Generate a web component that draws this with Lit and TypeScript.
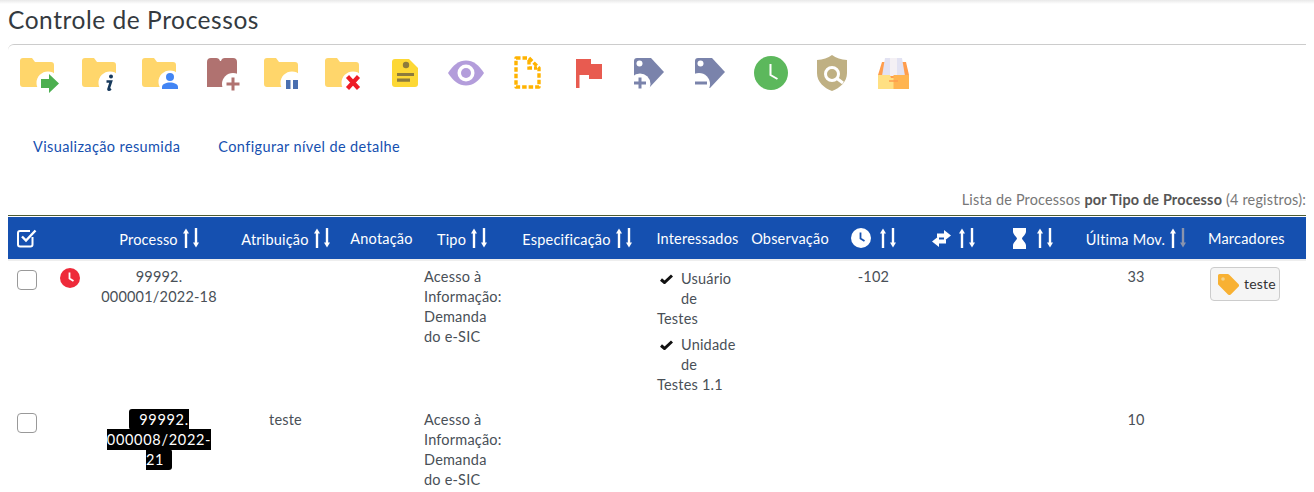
import {LitElement, css, html, svg} from 'lit';
import {customElement} from 'lit/decorators.js';

const folder = (badge: unknown) => svg`
  <path d="M0 5a3 3 0 0 1 3-3h9l3 4h16a3 3 0 0 1 3 3v19a3 3 0 0 1-3 3H3a3 3 0 0 1-3-3z" fill="#ffd66b"/>
  ${badge}`;

const toolbarIcons = [
  folder(svg`<circle cx="28" cy="27" r="11.5" fill="#fff"/>
    <path d="M21 23h8v-5l10 9.500-10 9.500v-5h-8z" fill="#4caf50"/>`),
  svg`<g transform="translate(1)">${folder(svg`
    <circle cx="28" cy="27" r="11.500" fill="#fff"/>
    <circle cx="29" cy="20.500" r="2" fill="#17395c"/>
    <path d="M24.500 25.500h4.500l-2.500 7.500c-.2.8.5 1 2.300-.4" fill="none" stroke="#17395c" stroke-width="2.600"/>`)}</g>`,
  folder(svg`<circle cx="28" cy="26" r="11.500" fill="#fff"/>
    <circle cx="28" cy="21" r="4" fill="#4285f4"/>
    <path d="M20 33v-2c0-3 4-4.500 8-4.500s8 1.500 8 4.500v2z" fill="#4285f4"/>`),
  svg`<path d="M4 31V6a4 4 0 0 1 4-4h5a4 4 0 0 1 4 3h1a4 4 0 0 1 4-3h8a4 4 0 0 1 4 4v25z" fill="#b07270"/>
    <circle cx="30" cy="28" r="11" fill="#fff"/>
    <path d="M30 21.500v13M23.500 28h13" stroke="#b07270" stroke-width="3"/>`,
  folder(svg`<circle cx="28" cy="27" r="11.500" fill="#fff"/>
    <path d="M22 24h4.500v9H22zM29 24h5v9h-5z" fill="#4a6fb0"/>`),
  folder(svg`<circle cx="28" cy="27" r="11.500" fill="#fff"/>
    <path d="M22.500 20.500l11 12M33.500 20.500l-11 12" stroke="#ee1c25" stroke-width="4.200"/>`),
  svg`<path d="M9 3h14l9 9v16a3 3 0 0 1-3 3H9a3 3 0 0 1-3-3V6a3 3 0 0 1 3-3z" fill="#fdd835"/>
    <circle cx="20" cy="9" r="3.200" fill="#8d7b3c"/>
    <path d="M11 17h17v3H11zM11 22.500h13v3.300H11z" fill="#8d7b3c"/>`,
  svg`<path d="M1 17C6 9 12 4.500 19 4.500S32 9 37 17c-5 8-11 12.500-18 12.500S6 25 1 17z" fill="#b39ddb"/>
    <circle cx="19" cy="17" r="8.500" fill="#fff"/>
    <circle cx="19" cy="17" r="5" fill="#b39ddb"/>`,
  svg`<path d="M8 2h13l10 10v19H8z" fill="none" stroke="#ffb300" stroke-width="3.400" stroke-dasharray="4.500 2" stroke-linejoin="round"/>
    <path d="M21 4v8h8" fill="none" stroke="#ffb300" stroke-width="3.400" stroke-dasharray="4.500 2"/>`,
  svg`<path d="M7 3h3.500v29H7z" fill="#e85b50"/>
    <path d="M10 3h12v5h11v15H20v-4H10z" fill="#e85b50"/>`,
  svg`<path d="M4 5a3 3 0 0 1 3-3h14l13 14-15 16H4z" fill="#7a83ab"/>
    <circle cx="9.500" cy="7.500" r="3" fill="#fff"/>
    <circle cx="10" cy="28" r="10.500" fill="#fff"/>
    <path d="M10 21.500v11M4 27h12" stroke="#7a83ab" stroke-width="3"/>`,
  svg`<path d="M4 5a3 3 0 0 1 3-3h14l13 14-15 16H4z" fill="#7a83ab"/>
    <circle cx="9.500" cy="7.500" r="3" fill="#fff"/>
    <circle cx="8" cy="28" r="11" fill="#fff"/>
    <path d="M4 27h12" stroke="#7a83ab" stroke-width="3"/>`,
  svg`<circle cx="19" cy="17" r="17" fill="#5cb85c"/>
    <path d="M18.500 8v11l7 4" fill="none" stroke="#fff" stroke-width="2"/>`,
  svg`<path d="M19-1c4 3 9 4.500 15 5v13c0 9-7 15-15 18C11 32 4 26 4 17V4c6-.5 11-2 15-5z" fill="#bfb083"/>
    <circle cx="19" cy="18" r="6.500" fill="none" stroke="#fff" stroke-width="3"/>
    <path d="M24 22.500l6 4.500" stroke="#fff" stroke-width="3"/>`,
  svg`<path d="M8 6h24l3 13v6H4v-6z" fill="#ff9d4d"/>
    <path d="M11 2h17l3 18H8z" fill="#e2e2f2"/>
    <path d="M16 2h7v18h-7z" fill="#f4f0f4"/>
    <path d="M4 19h12l1 3h4l2-3h12v14H4z" fill="#ffe083"/>
    <path d="M19.500 19H35v14H19.500z" fill="#ffb450"/>
    <path d="M15 25h9" stroke="#ff9d4d" stroke-width="1.500"/>`,
];

const sortArrows = (dimDown = false) => html`<svg class="sort" viewBox="0 0 16 20">
  <path d="M3 20V4" stroke="#fff" stroke-width="2.400"/><path d="M0 5.500L3 0.500l3 5z" fill="#fff"/>
  <path d="M13 0v16" stroke=${dimDown ? '#8a94ad' : '#fff'} stroke-width="2.400"/>
  <path d="M10 14.500l3 5 3-5z" fill=${dimDown ? '#8a94ad' : '#fff'}/>
</svg>`;

const clockGlyph = (fill: string, bg: string) => html`<svg class="clock" viewBox="0 0 20 20">
  <circle cx="10" cy="10" r="10" fill=${bg}/>
  <path d="M9.500 4.500v6l4 2.500" fill="none" stroke=${fill} stroke-width="1.800"/>
</svg>`;

const swapGlyph = html`<svg class="swap" viewBox="0 0 19 17">
  <path d="M5 3.500h7V0l7 5.500-7 5.500V7.500H5z" fill="#fff"/>
  <path d="M14 13.500H7V17L0 11.500 7 6v3.500h7z" fill="#fff"/>
</svg>`;

const hourglassGlyph = html`<svg class="hourglass" viewBox="0 0 13 21">
  <path d="M0 0h13v3.500c0 3-3.500 5-4 7 .5 2 4 4 4 7V21H0v-3.500c0-3 3.500-5 4-7-.5-2-4-4-4-7z" fill="#fff"/>
</svg>`;

const tagGlyph = html`<svg class="tag" viewBox="0 0 21 21">
  <path d="M1.500 0h8a2 2 0 0 1 1.500.6l9.400 9.400a2 2 0 0 1 0 2.800l-7.600 7.600a2 2 0 0 1-2.800 0L.6 11A2 2 0 0 1 0 9.500v-8A1.500 1.500 0 0 1 1.500 0z" fill="#f8b133"/>
  <circle cx="5" cy="5" r="1.800" fill="#f3d38c"/>
</svg>`;

const checkGlyph = html`<svg class="check" viewBox="0 0 13 10">
  <path d="M1 5.500l3.500 3L12 1.500" fill="none" stroke="#111" stroke-width="3"/>
</svg>`;

@customElement('app-root')
export class AppRoot extends LitElement {
  static styles = css`
    :host {
      display: block;
      height: 100vh;
      overflow: hidden;
      background: linear-gradient(#e9e9e9, #fff 4px);
      font-family: Lato, 'Noto Sans', sans-serif;
      font-size: 14.5px;
      letter-spacing: 0.2px;
      color: #495057;
      padding: 0 8px;
      box-sizing: border-box;
    }

    h1 {
      margin: 0;
      padding-top: 5px;
      height: 44px;
      box-sizing: border-box;
      font-size: 24.5px;
      line-height: 30px;
      font-weight: 400;
      letter-spacing: 0.55px;
      color: #343a40;
    }

    .toolbar {
      display: flex;
      gap: 21px;
      height: 90px;
      padding: 11px 0 0 12px;
      box-sizing: border-box;
      border-top: 1px solid #ccc;
      border-top-left-radius: 6px;
    }

    .toolbar svg {
      width: 40px;
      height: 40px;
      overflow: visible;
      flex: none;
    }

    .links {
      display: flex;
      gap: 38px;
      height: 40px;
      padding: 3px 0 0 25px;
      box-sizing: border-box;
      line-height: 20px;
      letter-spacing: 0.38px;
      color: #1550b0;
    }

    .caption {
      margin-top: 16px;
      height: 25px;
      line-height: 20px;
      text-align: right;
      color: #777;
      font-size: 14.4px;
    }

    .caption b {
      color: #555;
    }

    .rule {
      height: 1px;
      margin-bottom: 1px;
      background: #4d5c33;
    }

    table {
      width: 1298px;
      table-layout: fixed;
      border-collapse: collapse;
    }

    thead th {
      height: 43px;
      padding: 0;
      background: #1550b0;
      border-bottom: 2px solid #eee;
      box-sizing: border-box;
      color: #fff;
      font-weight: 400;
      white-space: nowrap;
      text-align: center;
    }

    th > div {
      display: flex;
      justify-content: center;
      align-items: center;
      gap: 5px;
    }

    .lowered {
      padding-top: 3px;
    }

    .sort {
      width: 16px;
      height: 20px;
      flex: none;
    }

    .clock {
      width: 20px;
      height: 20px;
      flex: none;
    }

    .swap {
      width: 19px;
      height: 17px;
      flex: none;
    }

    .hourglass {
      width: 13px;
      height: 21px;
      flex: none;
    }

    .all {
      display: block;
      width: 20px;
      height: 20px;
      margin-left: 9px;
    }

    .head-icons > div {
      gap: 9px;
    }

    .head-swap > div {
      gap: 8px;
      padding-left: 4px;
    }

    .head-hourglass > div {
      gap: 11px;
      padding-left: 6px;
    }

    .marks > div {
      justify-content: flex-start;
      padding-left: 6px;
    }

    td {
      padding: 6px 0 0;
      vertical-align: top;
      line-height: 20px;
      text-align: center;
    }

    td.left {
      text-align: left;
      padding-left: 4px;
    }

    .row-1 td {
      height: 144px;
      box-sizing: border-box;
    }

    .box {
      width: 20px;
      height: 20px;
      margin: 3px 0 0 9px;
      border: 1.5px solid #999;
      border-radius: 4px;
      box-sizing: border-box;
      background: #fff;
    }

    .clock-cell .clock {
      display: block;
      margin: 1px 0 0 10px;
    }

    .marked {
      background: #000;
      color: #fff;
      padding: 2px 8px 2px 10px;
      border-radius: 3px;
      letter-spacing: 0.7px;
      -webkit-box-decoration-break: slice;
      box-decoration-break: slice;
    }

    td.people {
      padding: 8px 0 0 7px;
      text-align: left;
    }

    .person {
      margin-bottom: 6px;
      width: 84px;
    }

    .person::after {
      content: '';
      display: block;
      clear: both;
    }

    .tick {
      float: left;
      width: 24px;
      height: 40px;
      padding: 5px 0 0 3px;
      box-sizing: border-box;
    }

    .check {
      display: block;
      width: 13px;
      height: 10px;
    }

    .chip {
      display: inline-flex;
      align-items: center;
      gap: 5px;
      width: 70px;
      height: 34px;
      margin: 0 0 0 8px;
      padding-left: 7px;
      box-sizing: border-box;
      border: 1px solid #ccc;
      border-radius: 4px;
      background: #f5f5f5;
      color: #333;
      font-size: 14px;
    }

    .tag {
      width: 21px;
      height: 21px;
      flex: none;
    }

    td.chip-cell {
      text-align: left;
    }
  `;

  render() {
    return html`
      <h1>Controle de Processos</h1>
      <div class="toolbar">
        ${toolbarIcons.map((icon) => html`<svg viewBox="0 0 40 40">${icon}</svg>`)}
      </div>
      <div class="links">
        <span>Visualização resumida</span>
        <span>Configurar nível de detalhe</span>
      </div>
      <div class="caption">Lista de Processos <b>por Tipo de Processo</b> (4 registros):</div>
      <div class="rule"></div>
      <table>
        <colgroup>
          <col style="width:42px" /><col style="width:40px" /><col style="width:138px" />
          <col style="width:115px" /><col style="width:77px" /><col style="width:84px" />
          <col style="width:146px" /><col style="width:95px" /><col style="width:90px" />
          <col style="width:77px" /><col style="width:78px" /><col style="width:80px" />
          <col style="width:132px" /><col style="width:104px" />
        </colgroup>
        <thead>
          <tr>
            <th>
              <svg class="all" viewBox="0 0 20 20">
                <path d="M15.500 9v7.500a2 2 0 0 1-2 2H3a2 2 0 0 1-2-2V5a2 2 0 0 1 2-2h10" fill="none" stroke="#fff" stroke-width="2"/>
                <path d="M5 8.500l4 4 9.500-10" fill="none" stroke="#fff" stroke-width="2.400"/>
              </svg>
            </th>
            <th></th>
            <th><div><span class="lowered">Processo</span>${sortArrows()}</div></th>
            <th><div><span class="lowered">Atribuição</span>${sortArrows()}</div></th>
            <th>Anotação</th>
            <th><div><span class="lowered">Tipo</span>${sortArrows()}</div></th>
            <th><div><span class="lowered">Especificação</span>${sortArrows()}</div></th>
            <th>Interessados</th>
            <th>Observação</th>
            <th class="head-icons"><div>${clockGlyph('#1550b0', '#fff')}${sortArrows()}</div></th>
            <th class="head-swap"><div>${swapGlyph}${sortArrows()}</div></th>
            <th class="head-hourglass"><div>${hourglassGlyph}${sortArrows()}</div></th>
            <th><div><span class="lowered">Última Mov.</span>${sortArrows(true)}</div></th>
            <th class="marks"><div>Marcadores</div></th>
          </tr>
        </thead>
        <tbody>
          <tr class="row-1">
            <td><div class="box"></div></td>
            <td class="clock-cell">${clockGlyph('#fff', '#ee2a3a')}</td>
            <td>99992.<br />000001/2022-18</td>
            <td></td>
            <td></td>
            <td class="left">Acesso à<br />Informação:<br />Demanda<br />do e-SIC</td>
            <td></td>
            <td class="people">
              <div class="person"><span class="tick">${checkGlyph}</span>Usuário<br />de<br />Testes</div>
              <div class="person"><span class="tick">${checkGlyph}</span>Unidade<br />de<br />Testes 1.1</div>
            </td>
            <td></td>
            <td>-102</td>
            <td></td>
            <td></td>
            <td>33</td>
            <td class="chip-cell"><span class="chip">${tagGlyph}teste</span></td>
          </tr>
          <tr>
            <td><div class="box"></div></td>
            <td></td>
            <td><span class="marked">99992.<br />000008/2022-<br />21</span></td>
            <td>teste</td>
            <td></td>
            <td class="left">Acesso à<br />Informação:<br />Demanda<br />do e-SIC</td>
            <td></td>
            <td></td>
            <td></td>
            <td></td>
            <td></td>
            <td></td>
            <td>10</td>
            <td></td>
          </tr>
        </tbody>
      </table>
    `;
  }
}
